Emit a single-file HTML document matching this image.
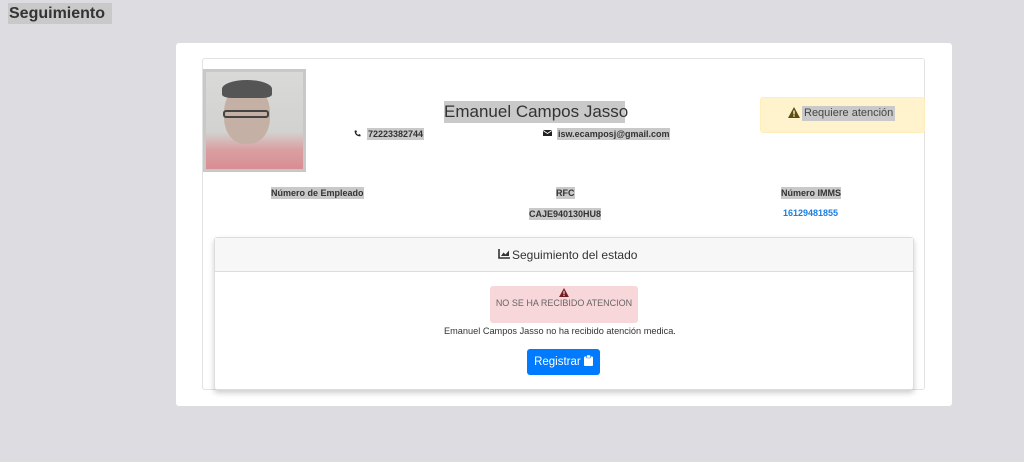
<!DOCTYPE html>
<html><head><meta charset="utf-8"><style>
*{margin:0;padding:0;box-sizing:border-box}
body{width:1024px;height:462px;background:#dddce1;font-family:"Liberation Sans",sans-serif;position:relative;overflow:hidden;color:#212529}
.a{position:absolute;white-space:nowrap}
.hl{background:#c9c9c9}
.b{font-weight:bold;font-size:9px;color:#333}
</style></head><body>
<div class="a hl" style="left:8px;top:3px;width:104px;height:21px;font-weight:bold;font-size:16px;line-height:21px;padding-left:1px;color:#333">Seguimiento</div>
<div class="a" style="left:176px;top:43px;width:776px;height:363px;background:#fff;border-radius:3px"></div>
<div class="a" style="left:202px;top:58px;width:723px;height:332px;border:1px solid #e2e2e2;border-radius:3px"></div>
<div class="a" style="left:203px;top:69px;width:103px;height:103px;background:#c8c8c8;padding:3px">
 <div style="width:97px;height:97px;background:linear-gradient(180deg,#d9d9d7 0%,#d2d2d0 62%,#d9a0a2 80%,#d88e93 100%);position:relative;overflow:hidden">
  <div class="a" style="left:18px;top:14px;width:46px;height:58px;border-radius:45%;background:#c4b0a4"></div>
  <div class="a" style="left:16px;top:8px;width:50px;height:18px;border-radius:50% 50% 20% 20%;background:#555"></div>
  <div class="a" style="left:17px;top:38px;width:46px;height:8px;border:2px solid #444;border-radius:3px"></div>
 </div>
</div>
<div class="a hl" style="left:444px;top:101px;width:181px;height:22px;font-size:17px;line-height:22px;text-align:center;color:#333">Emanuel Campos Jasso</div>
<svg class="a" style="left:353px;top:129px" width="9" height="9" viewBox="0 0 10 10"><path d="M8.5 6.5L7 5.5 6 6.5C4.8 6 4 5.2 3.5 4L4.5 3 3.5 1.5 1.8 1.8C1.8 6 4 8.2 8.2 8.2z" fill="#222"/></svg>
<div class="a hl b" style="left:367px;top:128px;height:12px;line-height:12px;padding:0 1px">72223382744</div>
<svg class="a" style="left:543px;top:129px" width="9" height="8" viewBox="0 0 9 8"><rect x="0" y="1" width="9" height="6" fill="#222"/><path d="M0 1.5L4.5 4.5 9 1.5" stroke="#fff" fill="none" stroke-width=".9"/></svg>
<div class="a hl b" style="left:557px;top:128px;height:12px;line-height:12px;padding:0 1px">isw.ecamposj@gmail.com</div>
<div class="a" style="left:760px;top:97px;width:165px;height:36px;background:#fff3cd;border:1px solid #ffeeba;border-radius:3px"></div>
<svg class="a" style="left:788px;top:107px" width="12" height="11" viewBox="0 0 12 11"><path d="M6 0L12 11H0z" fill="#5d4b14"/><rect x="5.3" y="3.5" width="1.4" height="4" fill="#fff3cd"/><rect x="5.3" y="8.3" width="1.4" height="1.4" fill="#fff3cd"/></svg>
<div class="a hl" style="left:802px;top:106px;height:15px;line-height:15px;font-size:11px;color:#444;padding:0 2px">Requiere atención</div>
<div class="a hl b" style="left:271px;top:187px;height:12px;line-height:12px">Número de Empleado</div>
<div class="a hl b" style="left:556px;top:187px;height:12px;line-height:12px">RFC</div>
<div class="a hl b" style="left:529px;top:208px;height:12px;line-height:12px">CAJE940130HU8</div>
<div class="a hl b" style="left:781px;top:187px;height:12px;line-height:12px">Número IMMS</div>
<div class="a b" style="left:783px;top:208px;color:#1a7fe0">16129481855</div>
<div class="a" style="left:214px;top:237px;width:700px;height:153px;background:#fff;border:1px solid #ddd;border-radius:3px;box-shadow:0 3px 6px rgba(0,0,0,.2)">
 <div style="height:34px;background:#f7f7f7;border-bottom:1px solid #ddd"></div>
</div>
<svg class="a" style="left:498px;top:249px" width="12" height="10" viewBox="0 0 12 10"><path d="M1 0V9H12" stroke="#333" stroke-width="1.6" fill="none"/><path d="M3 7L5.5 3.5 7.5 5.5 11 1.5V7z" fill="#333"/></svg>
<div class="a" style="left:512px;top:248px;font-size:12px;line-height:14px;color:#333">Seguimiento del estado</div>
<div class="a" style="left:490px;top:286px;width:148px;height:37px;background:#f8d7da;border-radius:3px;text-align:center;font-size:9px;color:#666">
 <svg style="display:block;margin:2px auto 0" width="10" height="9" viewBox="0 0 12 11"><path d="M6 0L12 11H0z" fill="#721c24"/><rect x="5.3" y="3.5" width="1.4" height="4" fill="#f8d7da"/><rect x="5.3" y="8.3" width="1.4" height="1.4" fill="#f8d7da"/></svg>
 <div style="line-height:12px">NO SE HA RECIBIDO ATENCION</div></div>
<div class="a" style="left:444px;top:326px;font-size:9.2px;color:#333">Emanuel Campos Jasso no ha recibido atención medica.</div>
<div class="a" style="left:527px;top:349px;width:73px;height:26px;background:#007bff;border-radius:3px;color:#fff;font-size:11.5px;line-height:26px;text-align:center">Registrar <svg style="vertical-align:-1px" width="9" height="11" viewBox="0 0 9 11"><rect x="0" y="1.5" width="9" height="9.5" rx="1" fill="#fff"/><rect x="2.5" y="0" width="4" height="3" rx=".8" fill="#fff" stroke="#007bff" stroke-width=".6"/></svg></div>
</body></html>
